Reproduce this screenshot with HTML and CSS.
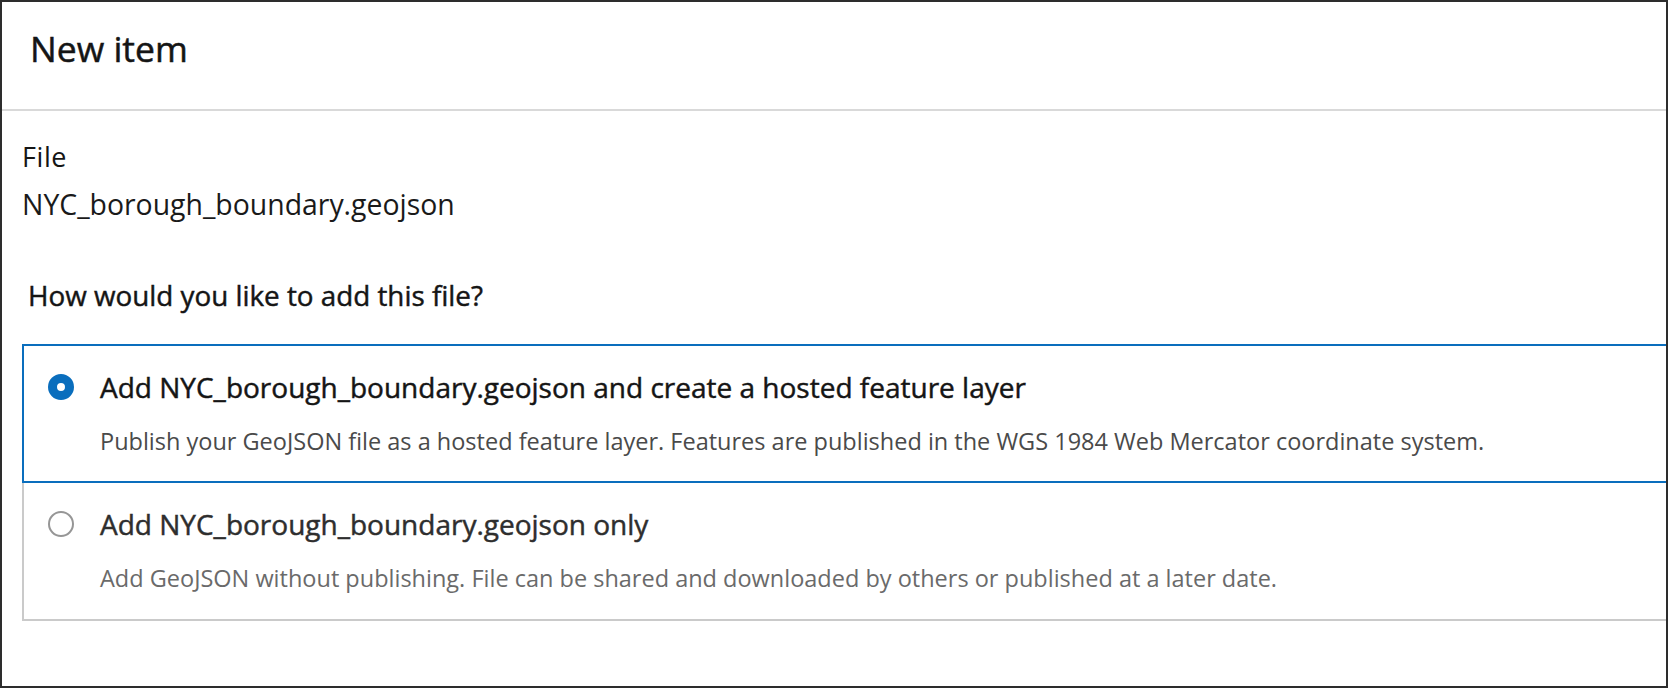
FILE: index.html
```html
<!DOCTYPE html>
<html lang="en">
<head>
<meta charset="utf-8">
<title>New item</title>
<link rel="stylesheet" href="styles.css">
</head>
<body>
<div class="dialog">
  <header class="dialog-header">
    <h2 class="dialog-title">New item</h2>
  </header>
  <div class="dialog-body">
    <div class="field">
      <div class="field-label">File</div>
      <div class="field-value">NYC_borough_boundary.geojson</div>
    </div>
    <div class="choice">
      <div class="choice-legend">How would you like to add this file?</div>
      <div class="options">
        <div class="option selected">
          <span class="radio checked"></span>
          <div class="option-text">
            <div class="option-title">Add NYC_borough_boundary.geojson and create a hosted feature layer</div>
            <div class="option-desc">Publish your GeoJSON file as a hosted feature layer. Features are published in the WGS 1984 Web Mercator coordinate system.</div>
          </div>
        </div>
        <div class="option">
          <span class="radio"></span>
          <div class="option-text">
            <div class="option-title">Add NYC_borough_boundary.geojson only</div>
            <div class="option-desc">Add GeoJSON without publishing. File can be shared and downloaded by others or published at a later date.</div>
          </div>
        </div>
      </div>
    </div>
  </div>
</div>
</body>
</html>
```
FILE: styles.css
```css
html, body {
  margin: 0;
  padding: 0;
  background: #ffffff;
}

body {
  font-family: "Open Sans", "Noto Sans", "Liberation Sans", sans-serif;
  color: #151515;
}

.dialog {
  box-sizing: border-box;
  width: 1668px;
  height: 688px;
  border: 2px solid #2d2d2d;
  overflow: hidden;
  background: #ffffff;
}

.dialog-header {
  height: 109px;
  box-sizing: border-box;
  padding: 26px 0 0 28px;
  border-bottom: 2px solid #d9d9d9;
}

.dialog-title {
  margin: 0;
  font-size: 35.5px;
  line-height: 40px;
  font-weight: 400;
  -webkit-text-stroke-width: 0.5px;
  color: #151515;
}

.dialog-body {
  padding: 31px 0 0 20px;
}

.field-label {
  font-size: 27px;
  line-height: 30px;
  letter-spacing: 0.6px;
  color: #151515;
}

.field-value {
  margin-top: 15px;
  font-size: 28.4px;
  line-height: 34px;
  color: #1a1a1a;
}

.choice {
  margin-top: 58px;
}

.choice-legend {
  padding-left: 6px;
  font-size: 27.8px;
  line-height: 32px;
  font-weight: 400;
  -webkit-text-stroke-width: 0.45px;
  color: #151515;
}

.options {
  margin-top: 33px;
  margin-right: -6px;
}

.option {
  display: flex;
  align-items: flex-start;
  gap: 26px;
  padding: 24px 0 25px 24px;
  border: 2px solid #cacaca;
}

.option + .option {
  border-top: 0;
  padding-top: 24px;
  padding-bottom: 26px;
}

.option.selected {
  border-color: #0a6ebd;
}

.radio {
  flex: none;
  box-sizing: border-box;
  width: 26px;
  height: 26px;
  margin-top: 4px;
  border-radius: 50%;
  border: 2px solid #969696;
  background: #ffffff;
}

.radio.checked {
  border: 9px solid #0a6ebd;
}

.option-title {
  font-size: 28px;
  line-height: 34px;
  font-weight: 400;
  -webkit-text-stroke-width: 0.45px;
  color: #151515;
}

.option-desc {
  margin-top: 22px;
  font-size: 23.5px;
  line-height: 30px;
  color: #4a4a4a;
}

.option:not(.selected) .option-title {
  color: #2e2e2e;
}

.option:not(.selected) .option-desc {
  color: #6a6a6a;
}
```
